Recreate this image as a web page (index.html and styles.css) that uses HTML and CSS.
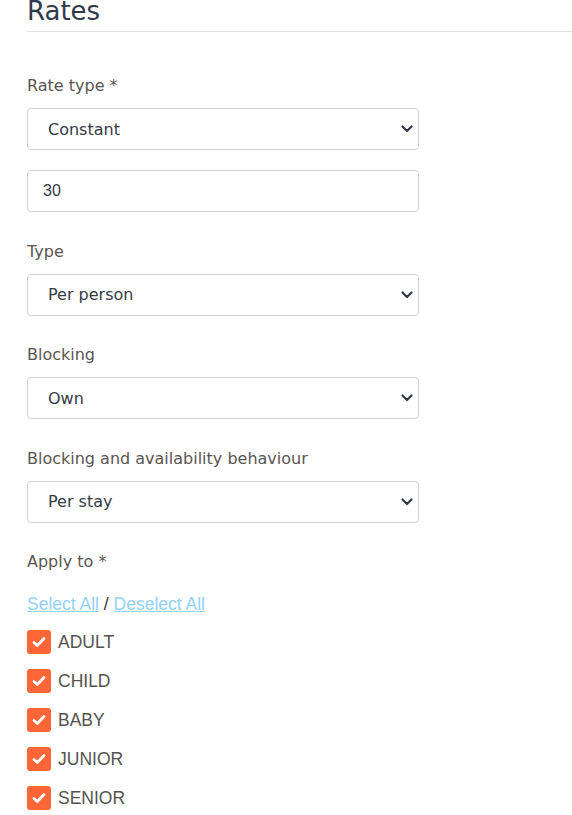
FILE: index.html
```html
<!DOCTYPE html>
<html>
<head>
<meta charset="utf-8">
<link rel="stylesheet" href="styles.css">
</head>
<body>
<div class="page">
  <h2 class="title">Rates</h2>

  <div class="group first">
    <label class="lbl">Rate type *</label>
    <div class="sel-wrap">
      <select class="sel"><option>Constant</option></select>
      <svg class="chev" width="12" height="8" viewBox="0 0 12 8"><path d="M1.5 1.5 L6 6 L10.5 1.5" fill="none" stroke="#343a40" stroke-width="2.2" stroke-linecap="round" stroke-linejoin="round"/></svg>
    </div>
    <input class="inp" type="text" value="30">
  </div>

  <div class="group">
    <label class="lbl">Type</label>
    <div class="sel-wrap">
      <select class="sel"><option>Per person</option></select>
      <svg class="chev" width="12" height="8" viewBox="0 0 12 8"><path d="M1.5 1.5 L6 6 L10.5 1.5" fill="none" stroke="#343a40" stroke-width="2.2" stroke-linecap="round" stroke-linejoin="round"/></svg>
    </div>
  </div>

  <div class="group">
    <label class="lbl">Blocking</label>
    <div class="sel-wrap">
      <select class="sel"><option>Own</option></select>
      <svg class="chev" width="12" height="8" viewBox="0 0 12 8"><path d="M1.5 1.5 L6 6 L10.5 1.5" fill="none" stroke="#343a40" stroke-width="2.2" stroke-linecap="round" stroke-linejoin="round"/></svg>
    </div>
  </div>

  <div class="group">
    <label class="lbl">Blocking and availability behaviour</label>
    <div class="sel-wrap">
      <select class="sel"><option>Per stay</option></select>
      <svg class="chev" width="12" height="8" viewBox="0 0 12 8"><path d="M1.5 1.5 L6 6 L10.5 1.5" fill="none" stroke="#343a40" stroke-width="2.2" stroke-linecap="round" stroke-linejoin="round"/></svg>
    </div>
  </div>

  <div class="group last">
    <label class="lbl">Apply to *</label>
    <div class="links"><a href="#">Select All</a> / <a href="#">Deselect All</a></div>
    <div class="checks">
      <div class="chk"><span class="box"><svg width="14" height="12" viewBox="0 0 14 12"><path d="M2 6.5 L5.3 9.5 L12 2.5" fill="none" stroke="#fff" stroke-width="2.8" stroke-linecap="round" stroke-linejoin="round"/></svg></span><span class="ct">ADULT</span></div>
      <div class="chk"><span class="box"><svg width="14" height="12" viewBox="0 0 14 12"><path d="M2 6.5 L5.3 9.5 L12 2.5" fill="none" stroke="#fff" stroke-width="2.8" stroke-linecap="round" stroke-linejoin="round"/></svg></span><span class="ct">CHILD</span></div>
      <div class="chk"><span class="box"><svg width="14" height="12" viewBox="0 0 14 12"><path d="M2 6.5 L5.3 9.5 L12 2.5" fill="none" stroke="#fff" stroke-width="2.8" stroke-linecap="round" stroke-linejoin="round"/></svg></span><span class="ct">BABY</span></div>
      <div class="chk"><span class="box"><svg width="14" height="12" viewBox="0 0 14 12"><path d="M2 6.5 L5.3 9.5 L12 2.5" fill="none" stroke="#fff" stroke-width="2.8" stroke-linecap="round" stroke-linejoin="round"/></svg></span><span class="ct">JUNIOR</span></div>
      <div class="chk"><span class="box"><svg width="14" height="12" viewBox="0 0 14 12"><path d="M2 6.5 L5.3 9.5 L12 2.5" fill="none" stroke="#fff" stroke-width="2.8" stroke-linecap="round" stroke-linejoin="round"/></svg></span><span class="ct">SENIOR</span></div>
    </div>
  </div>
</div>
</body>
</html>
```

FILE: styles.css
```css
html, body {
  margin: 0;
  padding: 0;
  background: #ffffff;
}
body {
  font-family: "DejaVu Sans", "Liberation Sans", Arial, sans-serif;
  overflow: hidden;
}
.page {
  padding-left: 27px;
}
.title {
  margin: -4px 0 0 0;
  padding: 0 0 5px 0;
  font-family: "DejaVu Sans", sans-serif;
  font-weight: 400;
  font-size: 26px;
  line-height: 30px;
  color: #2f3a4a;
  border-bottom: 1px solid #e2e2e2;
}
.group {
  display: flex;
  flex-direction: column;
  width: 392px;
  margin-bottom: 28.6px;
}
.group.first {
  margin-top: 43px;
}
.lbl {
  display: block;
  font-family: "DejaVu Sans", sans-serif;
  font-size: 16px;
  line-height: 22px;
  color: #5a5552;
  margin-bottom: 11px;
}
.sel-wrap {
  position: relative;
  height: 42px;
}
.sel {
  -webkit-appearance: none;
  appearance: none;
  box-sizing: border-box;
  width: 100%;
  height: 42px;
  margin: 0;
  padding: 0 40px 0 20px;
  border: 1px solid #ced2d8;
  border-radius: 4px;
  background: #fff;
  font-family: "DejaVu Sans", sans-serif;
  font-size: 16px;
  color: #343a46;
}
.chev {
  position: absolute;
  right: 6px;
  top: 17px;
  pointer-events: none;
}
.inp {
  box-sizing: border-box;
  width: 100%;
  height: 42px;
  margin: 20px 0 0 0;
  padding: 0 15px;
  border: 1px solid #ced2d8;
  border-radius: 4px;
  font-family: "Liberation Sans", Arial, sans-serif;
  font-size: 16px;
  color: #343a46;
}
.links {
  margin-top: 9px;
  font-family: "Liberation Sans", Arial, sans-serif;
  font-size: 17.5px;
  line-height: 22px;
  color: #333;
}
.links a {
  color: #92d2f8;
  text-decoration: underline;
}
.checks {
  margin-top: 15px;
  display: flex;
  flex-direction: column;
  gap: 15px;
}
.chk {
  display: flex;
  align-items: center;
  gap: 7px;
  height: 24px;
}
.box {
  width: 24px;
  height: 24px;
  border-radius: 3px;
  background: #ff6637;
  display: flex;
  align-items: center;
  justify-content: center;
}
.ct {
  font-family: "Liberation Sans", Arial, sans-serif;
  font-size: 17.5px;
  color: #55534f;
}
```
